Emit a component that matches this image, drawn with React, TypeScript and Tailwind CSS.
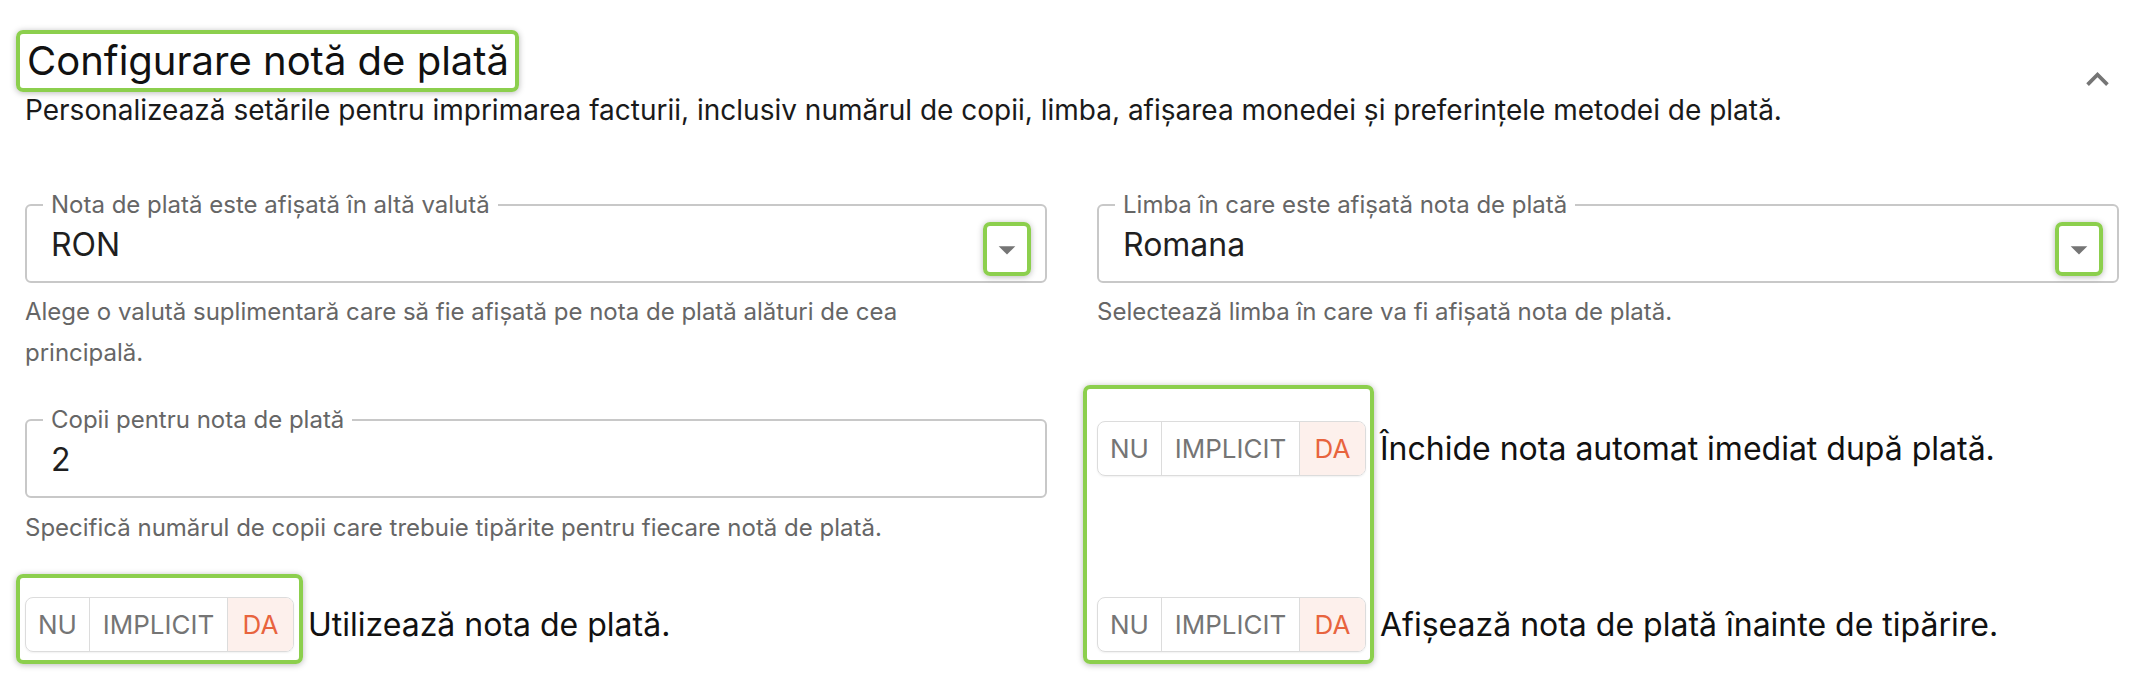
import React from "react";

function Highlight({
  className = "",
  children,
}: {
  className?: string;
  children: React.ReactNode;
}) {
  return (
    <div
      className={`border-4 border-[#8ccf4d] rounded-[7px] shadow-[0_1px_6px_rgba(0,0,0,0.28)] ${className}`}
    >
      {children}
    </div>
  );
}

function ArrowDown() {
  return (
    <svg viewBox="0 0 24 24" className="w-[43px] h-[43px] fill-[#757575]">
      <path d="M7 10l5 5 5-5z" />
    </svg>
  );
}

function OutlinedField({
  label,
  value,
  select,
  className = "",
}: {
  label: string;
  value: string;
  select?: boolean;
  className?: string;
}) {
  return (
    <fieldset
      className={`border-2 border-[#c8c8c8] rounded-[6px] pl-[16px] pr-[14px] pt-0 pb-[5px] min-w-0 ${className}`}
    >
      <legend className="px-[8px] text-[24px] leading-[22px] text-[#666666]">
        {label}
      </legend>
      <div className="flex items-center h-[54px] mt-[6px]">
        <span className="flex-1 pl-[8px] mb-[8px] text-[32px] leading-[38px] text-[#1f1f1f]">
          {value}
        </span>
        {select && (
          <Highlight className="w-[48px] h-[54px] flex items-center justify-center">
            <ArrowDown />
          </Highlight>
        )}
      </div>
    </fieldset>
  );
}

function Toggle() {
  return (
    <div className="flex h-[55px] border-[1.5px] border-[#dcdcdc] rounded-[8px] overflow-hidden text-[26px] shadow-[0_1px_2px_rgba(0,0,0,0.06)]">
      <div className="w-[64px] flex items-center justify-center text-[#757575] border-r border-[#dcdcdc]">
        NU
      </div>
      <div className="w-[138px] flex items-center justify-center text-[#757575] border-r border-[#dcdcdc]">
        IMPLICIT
      </div>
      <div className="w-[65px] flex items-center justify-center text-[#e8643e] bg-[#fdf0ec]">
        DA
      </div>
    </div>
  );
}

export default function App() {
  return (
    <div className="min-h-screen bg-white [font-family:Inter,sans-serif] pl-[25px] pr-[28px]">
      {/* Header */}
      <div className="flex justify-between items-start">
        <div>
          <Highlight className="inline-block -ml-[9px] mt-[30px] pl-[7px] pr-[6px]">
            <h2 className="text-[40px] leading-[54px] text-[#111111]">
              Configurare notă de plată
            </h2>
          </Highlight>
          <p className="mt-[1px] text-[28px] leading-[34px] text-[#1a1a1a]">
            Personalizează setările pentru imprimarea facturii, inclusiv numărul
            de copii, limba, afișarea monedei și preferințele metodei de plată.
          </p>
        </div>
        <svg
          viewBox="0 0 24 24"
          className="w-[45px] h-[45px] mt-[57px] -mr-[1px] fill-[#757575]"
        >
          <path d="m12 8-6 6 1.41 1.41L12 10.83l4.59 4.58L18 14z" />
        </svg>
      </div>

      {/* Settings */}
      <div className="grid grid-cols-2 gap-x-[50px] mt-[67px]">
        <div className="flex flex-col">
          <OutlinedField
            label="Nota de plată este afișată în altă valută"
            value="RON"
            select
          />
          <p className="mt-[8px] max-w-[940px] text-[24px] leading-[41px] text-[#666666]">
            Alege o valută suplimentară care să fie afișată pe nota de plată
            alături de cea principală.
          </p>
          <OutlinedField
            className="mt-[36px]"
            label="Copii pentru nota de plată"
            value="2"
          />
          <p className="mt-[9px] text-[24px] leading-[41px] text-[#666666]">
            Specifică numărul de copii care trebuie tipărite pentru fiecare notă
            de plată.
          </p>
          <div className="flex items-center mt-[26px]">
            <Highlight className="-ml-[9px] px-[5px] pt-[19px] pb-[8px]">
              <Toggle />
            </Highlight>
            <span className="ml-[5px] mt-[11px] text-[32px] text-[#111111]">
              Utilizează nota de plată.
            </span>
          </div>
        </div>

        <div className="flex flex-col">
          <OutlinedField
            label="Limba în care este afișată nota de plată"
            value="Romana"
            select
          />
          <p className="mt-[8px] text-[24px] leading-[41px] text-[#666666]">
            Selectează limba în care va fi afișată nota de plată.
          </p>
          <div className="flex mt-[53px]">
            <Highlight className="-ml-[14px] pl-[10px] pr-[4px] pt-[32px] pb-[8px] flex flex-col gap-[121px]">
              <Toggle />
              <Toggle />
            </Highlight>
            <div className="ml-[6px] pt-[36px] flex flex-col gap-[121px] text-[32px] text-[#111111]">
              <div className="h-[55px] flex items-center">
                Închide nota automat imediat după plată.
              </div>
              <div className="h-[55px] flex items-center">
                Afișează nota de plată înainte de tipărire.
              </div>
            </div>
          </div>
        </div>
      </div>
    </div>
  );
}
